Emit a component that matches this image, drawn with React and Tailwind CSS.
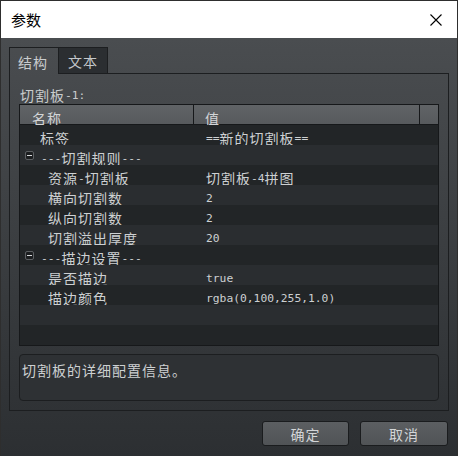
import React from 'react';

const CJK = /([\u3000-\u303f\u4e00-\u9fff\uff00-\uffef]+)/;

function T({ s }) {
  return s.split(CJK).filter(Boolean).map((p, i) =>
    CJK.test(p)
      ? <span key={i} className="font-['Noto_Sans_CJK_SC',sans-serif] text-[14px] tracking-[1px]">{p}</span>
      : <span key={i} className="font-['DejaVu_Sans_Mono',monospace] text-[11.3px] align-[2px]">{p}</span>
  );
}

const rows = [
  { name: '标签', value: '==新的切割板==' },
  { group: '---切割规则---' },
  { name: '资源-切割板', value: '切割板-4拼图', child: true },
  { name: '横向切割数', value: '2', child: true },
  { name: '纵向切割数', value: '2', child: true },
  { name: '切割溢出厚度', value: '20', child: true },
  { group: '---描边设置---' },
  { name: '是否描边', value: 'true', child: true },
  { name: '描边颜色', value: 'rgba(0,100,255,1.0)', child: true },
  {},
  {},
];

function MinusBox() {
  return (
    <span className="w-[9px] h-[9px] shrink-0 rounded-[2px] border border-[#5c5f62] bg-[#1b1d1f] flex items-center justify-center">
      <span className="w-[5px] h-px bg-[#d8dadc]" />
    </span>
  );
}

export default function App() {
  return (
    <div className="w-[458px] h-[456px] flex flex-col border-l border-t border-r border-[#2e2e2e] font-['Noto_Sans_CJK_SC',sans-serif] text-[14px] overflow-hidden">
      {/* title bar */}
      <div className="h-[37px] shrink-0 bg-white flex items-center justify-between pl-[10px] pr-[15px]">
        <span className="text-[15px] text-black pt-[2px]">参数</span>
        <svg width="12" height="12" viewBox="0 0 12 12" className="block">
          <path d="M0.5 0.5 L11.5 11.5 M11.5 0.5 L0.5 11.5" stroke="#000" strokeWidth="1.1" fill="none" />
        </svg>
      </div>

      {/* body */}
      <div className="flex-1 flex flex-col bg-linear-to-b from-[#4a4d50] to-[#2c2f32] pt-[9px] pl-[8px] pr-[8px]">
        {/* tabs */}
        <div className="flex h-[27px] shrink-0">
          <div className="w-[49px] border-l border-t border-[#1c1e20] pl-[8px] pt-[6px] leading-[16px] text-[#c9ccce]">
            <T s="结构" />
          </div>
          <div className="w-[50px] border border-[#1c1e20] bg-[#2b2e31] pl-[9px] pt-[5px] leading-[16px] text-[#c4c7ca]">
            <T s="文本" />
          </div>
          <div className="flex-1 border-b border-[#1c1e20]" />
        </div>

        {/* panel */}
        <div className="h-[337px] shrink-0 border-l border-r border-b border-[#1c1e20] px-[9px] flex flex-col">
          <div className="h-[30px] shrink-0 pl-[1px] pt-[13px] leading-[16px] text-[#c9ccce]">
            <T s="切割板-1:" />
          </div>

          {/* table */}
          <div className="h-[242px] shrink-0 border border-[#16181a] flex flex-col text-[#cdd0d2]">
            <div className="h-[20px] shrink-0 flex bg-linear-to-b from-[#606366] to-[#575a5d] border-b border-[#16181a] text-[#d3d5d7]">
              <div className="w-[174px] border-r border-[#16181a] pl-[12px] pt-[5px] leading-[16px]">
                <T s="名称" />
              </div>
              <div className="w-[226px] border-r border-[#16181a] pl-[11px] pt-[5px] leading-[16px]">
                <T s="值" />
              </div>
              <div className="flex-1" />
            </div>
            {rows.map((r, i) => (
              <div
                key={i}
                className={`h-[20px] shrink-0 flex leading-[16px] ${i % 2 === 0 ? 'bg-[#222527]' : 'bg-[#2a2d30]'}`}
              >
                {r.group ? (
                  <div className="flex items-start pl-[5px] pt-[5px]">
                    <span className="mt-[1px]"><MinusBox /></span>
                    <span className="pl-[7px]"><T s={r.group} /></span>
                  </div>
                ) : r.name ? (
                  <>
                    <div className={`w-[175px] shrink-0 pt-[5px] ${r.child ? 'pl-[28px]' : 'pl-[20px]'}`}>
                      <T s={r.name} />
                    </div>
                    <div className="flex-1 pl-[11px] pt-[5px] whitespace-nowrap">
                      <T s={r.value} />
                    </div>
                  </>
                ) : null}
              </div>
            ))}
          </div>

          {/* description */}
          <div className="mt-[8px] h-[47px] shrink-0 rounded-[4px] border border-[#1c1e20] bg-[#2e3134] pl-[2px] pt-[7px] leading-[16px] text-[#cdd0d2]">
            <T s="切割板的详细配置信息。" />
          </div>
        </div>

        {/* buttons */}
        <div className="flex justify-end gap-[11px] pr-[1px] mt-[10px]">
          <button className="w-[87px] h-[25px] rounded-[3px] border border-[#1a1c1e] bg-linear-to-b from-[#5c5f62] to-[#505356] text-[#d3d5d7] leading-[16px] pt-[1px]">
            <T s="确定" />
          </button>
          <button className="w-[88px] h-[25px] rounded-[3px] border border-[#1a1c1e] bg-linear-to-b from-[#5c5f62] to-[#505356] text-[#d3d5d7] leading-[16px] pt-[1px]">
            <T s="取消" />
          </button>
        </div>
      </div>
    </div>
  );
}
